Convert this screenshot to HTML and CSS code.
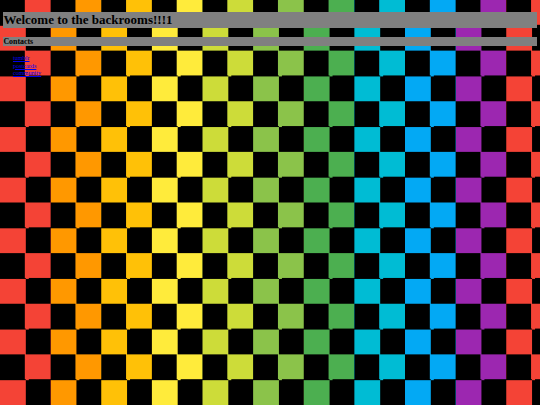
FILE: index.html
```html
<!DOCTYPE html>
<html lang="en">
<head>
<meta charset="utf-8">
<title>Welcome to the backrooms!!!1</title>
<link rel="stylesheet" href="styles.css">
</head>
<body>
<h1 class="title">Welcome to the backrooms!!!1</h1>
<h3 class="section">Contacts</h3>
<ul class="links">
  <li><a href="#">tumblr</a></li>
  <li><a href="#">postcards</a></li>
  <li><a href="#">community</a></li>
</ul>
</body>
</html>
```
FILE: styles.css
```css
html {
  min-height: 100%;
  background-color: #000;
  background-image:
    repeating-conic-gradient(transparent 0 25%, #000 0 50%),
    repeating-linear-gradient(to right,
      #f44336 0 50.625px,
      #ff9800 0 101.25px,
      #ffc107 0 151.875px,
      #ffeb3b 0 202.5px,
      #cddc39 0 253.125px,
      #8bc34a 0 303.75px,
      #4caf50 0 354.375px,
      #00bcd4 0 405px,
      #03a9f4 0 455.625px,
      #9c27b0 0 506.25px);
  background-size: 50.625px 50.625px, 100% 100%;
  background-position: 0 0, 0 0;
}

body {
  margin: 3.375px;
  font-family: "Liberation Serif", "Times New Roman", serif;
  font-size: 6.75px;
  color: #000;
}

.title {
  font-size: 13px;
  line-height: 15.5px;
  font-weight: bold;
  margin: 9px 0;
  background: #808080;
}

.section {
  font-size: 7.9px;
  line-height: 9px;
  font-weight: bold;
  margin: 7.9px 0;
  background: #808080;
}

.links {
  list-style: none;
  margin: 6.75px 0;
  padding-left: 9.6px;
  font-size: 6.2px;
  line-height: 7.8px;
}

.links a {
  color: #0000ee;
}
```
